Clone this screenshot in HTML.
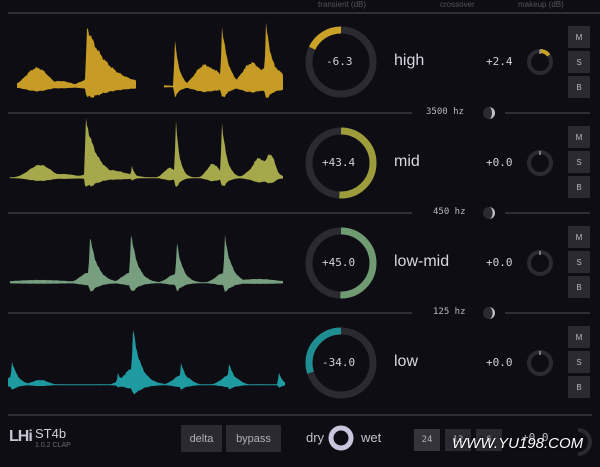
<!DOCTYPE html>
<html><head><meta charset="utf-8">
<style>
body{margin:0;width:600px;height:467px;background:#0e0d13;overflow:hidden;font-family:"Liberation Sans",sans-serif;position:relative}
.abs{position:absolute}
.mono{font-family:"DejaVu Sans Mono","Liberation Mono",monospace}
.hdr{color:#55545c;font-size:8px;top:0}
.lbl{color:#d8d6e0;font-size:16px}
.val{color:#d0d0d6;font-size:11px}
.btn{background:#2b2a31;color:#b8b8c0;font-size:8px;width:22px;height:22px;display:flex;align-items:center;justify-content:center;left:568px}
.bb{background:#2b2a31;color:#b0b0b8;font-size:11px;display:flex;align-items:center;justify-content:center}
</style></head><body>
<svg class="abs" style="left:0;top:0" width="600" height="467" id="s" xmlns="http://www.w3.org/2000/svg">
<g stroke="#3a3940" stroke-width="1.5">
<line x1="8" y1="13" x2="600" y2="13"/>
<line x1="8" y1="113" x2="412" y2="113"/><line x1="505" y1="113" x2="590" y2="113"/>
<line x1="8" y1="213" x2="412" y2="213"/><line x1="505" y1="213" x2="590" y2="213"/>
<line x1="8" y1="313" x2="412" y2="313"/><line x1="505" y1="313" x2="590" y2="313"/>
<line x1="8" y1="415" x2="592" y2="415"/>
</g>
<g id="w"></g>
<g fill="none" stroke-width="7">
<circle cx="341" cy="62" r="32" stroke="#2a2a30"/>
<circle cx="341" cy="62" r="32" stroke="#c9a227" stroke-dasharray="36 200" transform="rotate(-90 341 62) scale(1,-1) translate(0,-124)"/>
<circle cx="341" cy="163" r="32" stroke="#2a2a30"/>
<circle cx="341" cy="163" r="32" stroke="#9c9c3c" stroke-dasharray="102 200" transform="rotate(-90 341 163)"/>
<circle cx="341" cy="263" r="32" stroke="#2a2a30"/>
<circle cx="341" cy="263" r="32" stroke="#6f9a72" stroke-dasharray="101 200" transform="rotate(-90 341 263)"/>
<circle cx="341" cy="363" r="32" stroke="#2a2a30"/>
<circle cx="341" cy="363" r="32" stroke="#1f8e93" stroke-dasharray="60 200" transform="rotate(-90 341 363) scale(1,-1) translate(0,-726)"/>
</g>
<g fill="none" stroke-width="4">
<circle cx="540" cy="62" r="11" stroke="#2a2a30"/>
<circle cx="540" cy="62" r="11" stroke="#c9a227" stroke-dasharray="10 100" transform="rotate(-90 540 62)"/>
<circle cx="540" cy="163" r="11" stroke="#2a2a30"/>
<circle cx="540" cy="263" r="11" stroke="#2a2a30"/>
<circle cx="540" cy="363" r="11" stroke="#2a2a30"/>
<circle cx="341" cy="438" r="10" stroke="#c8c6dc" stroke-width="5"/>
</g>
<g stroke="#9a9aa0" stroke-width="1.5"><line x1="540" y1="50" x2="540" y2="54"/><line x1="540" y1="151" x2="540" y2="155"/><line x1="540" y1="251" x2="540" y2="255"/><line x1="540" y1="351" x2="540" y2="355"/></g>
<g fill="#2a2a30"><circle cx="489" cy="113" r="6"/><circle cx="489" cy="213" r="6"/><circle cx="489" cy="313" r="6"/></g>
<g fill="#c0c0c8"><path d="M489 107 A6 6 0 0 1 489 119 A3 6 0 0 0 489 107Z"/><path d="M489 207 A6 6 0 0 1 489 219 A3 5 0 0 0 489 207Z"/><path d="M489 307 A6 6 0 0 1 489 319 A3 5 0 0 0 489 307Z"/></g>
<path d="M578 430 A12 12 0 1 1 578 454" fill="none" stroke="#2a2a30" stroke-width="4"/>
</svg>
<div class="abs hdr" style="left:318px">transient (dB)</div>
<div class="abs hdr" style="left:440px">crossover</div>
<div class="abs hdr" style="left:518px">makeup (dB)</div>
<div class="abs val mono" style="left:326px;top:55px">-6.3</div>
<div class="abs val mono" style="left:322px;top:156px">+43.4</div>
<div class="abs val mono" style="left:322px;top:256px">+45.0</div>
<div class="abs val mono" style="left:322px;top:356px">-34.0</div>
<div class="abs lbl" style="left:394px;top:52px">high</div>
<div class="abs lbl" style="left:394px;top:153px">mid</div>
<div class="abs lbl" style="left:394px;top:253px">low-mid</div>
<div class="abs lbl" style="left:394px;top:353px">low</div>
<div class="abs val mono" style="left:486px;top:55px">+2.4</div>
<div class="abs val mono" style="left:486px;top:156px">+0.0</div>
<div class="abs val mono" style="left:486px;top:256px">+0.0</div>
<div class="abs val mono" style="left:486px;top:356px">+0.0</div>
<div class="abs val mono" style="left:426px;top:107px;font-size:9px;color:#b8b8c0">3500 hz</div>
<div class="abs val mono" style="left:433px;top:207px;font-size:9px;color:#b8b8c0">450 hz</div>
<div class="abs val mono" style="left:433px;top:307px;font-size:9px;color:#b8b8c0">125 hz</div>
<div class="abs btn" style="top:26px">M</div><div class="abs btn" style="top:51px">S</div><div class="abs btn" style="top:76px">B</div>
<div class="abs btn" style="top:126px">M</div><div class="abs btn" style="top:151px">S</div><div class="abs btn" style="top:176px">B</div>
<div class="abs btn" style="top:226px">M</div><div class="abs btn" style="top:251px">S</div><div class="abs btn" style="top:276px">B</div>
<div class="abs btn" style="top:326px">M</div><div class="abs btn" style="top:351px">S</div><div class="abs btn" style="top:376px">B</div>
<div class="abs" style="left:9px;top:428px;color:#c8c6d4;font-weight:bold;font-size:16px;letter-spacing:-1px">LHi</div>
<div class="abs" style="left:35px;top:426px;color:#d0d0d8;font-size:13px">ST4b</div>
<div class="abs" style="left:35px;top:442px;color:#6a6a72;font-size:7px">1.0.2 CLAP</div>
<div class="abs bb" style="left:181px;top:425px;width:41px;height:27px">delta</div>
<div class="abs bb" style="left:226px;top:425px;width:55px;height:27px">bypass</div>
<div class="abs" style="left:306px;top:430px;color:#c0c0c8;font-size:13px">dry</div>
<div class="abs" style="left:361px;top:430px;color:#c0c0c8;font-size:13px">wet</div>
<div class="abs bb mono" style="left:414px;top:429px;width:26px;height:22px;font-size:9px;background:#35343b">24</div>
<div class="abs bb mono" style="left:445px;top:429px;width:26px;height:22px;font-size:9px">12</div>
<div class="abs bb mono" style="left:476px;top:429px;width:26px;height:22px;font-size:9px">6</div>
<div class="abs mono" style="left:522px;top:431px;color:#c0c0c8;font-size:11px">+0.0</div>
<div class="abs" style="left:452px;top:435px;color:#fff;font-size:15px;font-style:italic;text-shadow:0 0 2px #000">WWW.YU198.COM</div>
<script>
(function(){
var bands=[
 {c:"#c69c26",b:87,lo:10,ev:[["g",37,19,11],["g",60,6,12],["s",87,60,22],["g",100,12,15],["s",175,45,5],["g",205,22,10],["g",213,18,8],["s",222,60,7],["g",252,24,10],["g",270,22,12],["s",266,62,8]],rng:[[17,136],[164,283]]},
 {c:"#a6a84c",b:178,lo:8,ev:[["g",40,13,11],["g",62,4,15],["s",86,58,12],["g",108,8,18],["s",132,12,3],["g",170,10,6],["s",176,55,4],["g",213,14,6],["s",222,55,5],["g",258,20,5],["g",270,24,5],["g",262,18,10]],rng:[[10,283]]},
 {c:"#779f7f",b:283,lo:8,ev:[["g",88,10,8],["s",90,46,8],["g",130,10,8],["s",131,50,7],["g",176,9,8],["s",177,40,6],["g",224,10,8],["s",225,46,7],["g",258,4,20],["g",40,3,30]],rng:[[10,283]]},
 {c:"#1f9aa0",b:385,lo:8,ev:[["s",12,24,6],["g",12,8,6],["g",40,5,8],["s",118,12,4],["g",135,18,10],["s",133,56,8],["g",182,10,8],["s",181,22,6],["g",230,10,8],["s",229,22,6],["s",279,12,4]],rng:[[8,285]]}
];
var g=document.getElementById('w');
var NS="http://www.w3.org/2000/svg";
for(var i=0;i<bands.length;i++){
 var B=bands[i];
 for(var j=0;j<B.rng.length;j++){
  var r=B.rng[j],top=[],bot=[];
  for(var x=r[0];x<=r[1];x++){
   var a=0.8;
   for(var k=0;k<B.ev.length;k++){
    var e=B.ev[k],d=x-e[1],v=0;
    if(e[0]=="s"){ if(d>=-2&&d<0)v=e[2]*(d+2)/2; else if(d>=0)v=e[2]*Math.exp(-d/e[3]); }
    else v=e[2]*Math.exp(-d*d/(2*e[3]*e[3]));
    a=Math.max(a,v);
   }
   var n=(Math.sin(x*0.9)+Math.sin(x*2.3))*0.035*a;
   top.push(x+','+(B.b-a-n).toFixed(1));
   bot.unshift(x+','+(B.b+Math.min(a*0.22,B.lo)+n*0.5).toFixed(1));
  }
  var p=document.createElementNS(NS,'polygon');
  p.setAttribute('fill',B.c);
  p.setAttribute('points',top.concat(bot).join(' '));
  g.appendChild(p);
 }
}
})();
</script>
</body></html>
